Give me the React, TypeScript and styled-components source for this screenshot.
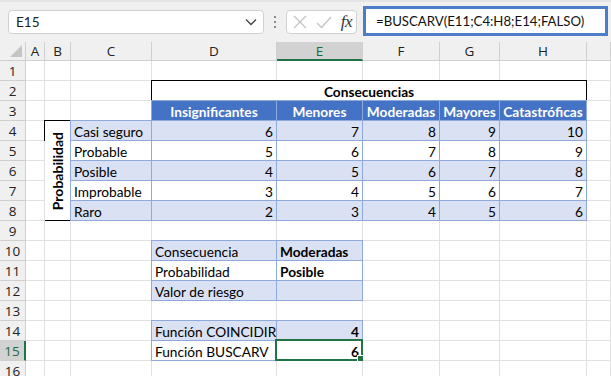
import React from "react";
import styled, { createGlobalStyle, css } from "styled-components";

const GlobalStyle = createGlobalStyle`
  html, body {
    margin: 0;
    padding: 0;
    background: #ffffff;
    overflow: hidden;
  }
  * {
    box-sizing: border-box;
  }
`;

const CELL_FONT = `Lato, "Liberation Sans", sans-serif`;
const UI_FONT = `"Open Sans", "Noto Sans", sans-serif`;

const GRID = "#e1e1e1";
const HEAD_LINE = "#cfcfcf";
const TABLE_LINE = "#8ea9db";
const BAND = "#d9e1f2";
const HEAD_BLUE = "#4472c4";
const GREEN = "#217346";

const Page = styled.div`
  width: 611px;
  height: 376px;
  overflow: hidden;
  background: #ffffff;
`;

const Toolbar = styled.div`
  height: 42px;
  background: #f0f0f0;
  border-top: 2px solid #e4e4e4;
  display: flex;
  align-items: flex-start;
  padding: 4px 0 0 8px;
`;

const NameBox = styled.div`
  width: 256px;
  height: 24px;
  margin-top: 4px;
  background: #ffffff;
  border: 1px solid #d0d0d0;
  border-radius: 4px;
  display: flex;
  align-items: center;
  justify-content: space-between;
  padding: 0 6px 0 7px;
  font-family: ${CELL_FONT};
  font-size: 13.5px;
  color: #222;
`;

const Dots = styled.div`
  width: 22px;
  height: 32px;
  display: flex;
  align-items: center;
  justify-content: center;
`;

const FxBox = styled.div`
  width: 71px;
  height: 24px;
  margin-top: 4px;
  background: #ffffff;
  border: 1px solid #d0d0d0;
  border-radius: 4px;
  display: flex;
  align-items: center;
  justify-content: space-between;
  padding: 0 4px 0 6px;
`;

const Fx = styled.span`
  font-family: "Liberation Serif", "DejaVu Serif", serif;
  font-style: italic;
  font-size: 17px;
  color: #333;
  letter-spacing: -0.5px;
`;

const FormulaBox = styled.div`
  width: 245px;
  height: 30px;
  margin-left: 6px;
  background: #ffffff;
  border: 3px solid #4d7cc8;
  display: flex;
  align-items: center;
  padding-left: 10px;
  font-family: ${CELL_FONT};
  font-size: 13.2px;
  color: #111;
`;

const Sheet = styled.div`
  display: grid;
  grid-template-columns: 26px 19px 26px 81px 125px 86px 77px 60px 87px 1fr;
  grid-template-rows: 19px repeat(16, 20px);
`;

type Align = "left" | "right" | "center";

const Cell = styled.div<{
  $col: number;
  $row: number;
  $span?: number;
  $rowSpan?: number;
  $bg?: string;
  $line?: string;
  $edge?: string;
  $align?: Align;
  $bold?: boolean;
  $color?: string;
}>`
  grid-column: ${(p) => p.$col} / span ${(p) => p.$span ?? 1};
  grid-row: ${(p) => p.$row} / span ${(p) => p.$rowSpan ?? 1};
  position: relative;
  background: ${(p) => p.$bg ?? "#ffffff"};
  border-right: 1px solid ${(p) => p.$line ?? GRID};
  border-bottom: 1px solid ${(p) => p.$line ?? GRID};
  ${(p) =>
    p.$edge &&
    css`
      box-shadow: -1px 0 0 ${p.$edge}, 0 -1px 0 ${p.$edge}, -1px -1px 0 ${p.$edge};
    `}
  display: flex;
  align-items: center;
  justify-content: ${(p) =>
    p.$align === "right" ? "flex-end" : p.$align === "center" ? "center" : "flex-start"};
  padding: 1px 3px 0 3px;
  font-family: ${CELL_FONT};
  font-size: 13.7px;
  font-weight: ${(p) => (p.$bold ? 700 : 400)};
  color: ${(p) => p.$color ?? "#000"};
  white-space: nowrap;
  overflow: visible;
`;

const HeadCell = styled.div<{ $col: number; $row: number; $active?: boolean; $side?: "col" | "row" }>`
  grid-column: ${(p) => p.$col};
  grid-row: ${(p) => p.$row};
  position: relative;
  background: ${(p) => (p.$active ? "#d2d2d2" : "#f0f0f0")};
  border-right: 1px solid ${HEAD_LINE};
  border-bottom: 1px solid ${HEAD_LINE};
  ${(p) =>
    p.$active && p.$side === "col" &&
    css`
      border-bottom: 2px solid ${GREEN};
    `}
  ${(p) =>
    p.$active && p.$side === "row" &&
    css`
      border-right: 2px solid ${GREEN};
    `}
  display: flex;
  align-items: center;
  justify-content: center;
  font-family: ${UI_FONT};
  font-size: 13.5px;
  color: ${(p) => (p.$active ? "#1b6b3f" : "#222")};
`;

const Corner = styled.div`
  grid-column: 1;
  grid-row: 1;
  position: relative;
  background: #f0f0f0;
  border-right: 1px solid ${HEAD_LINE};
  border-bottom: 1px solid ${HEAD_LINE};
  &::after {
    content: "";
    position: absolute;
    right: 3px;
    bottom: 3px;
    width: 0;
    height: 0;
    border-left: 12px solid transparent;
    border-bottom: 12px solid #c4c4c4;
  }
`;

const VerticalLabel = styled.span`
  writing-mode: vertical-rl;
  transform: rotate(180deg);
  font-weight: 700;
  font-size: 14px;
`;

const Selection = styled.div`
  position: absolute;
  left: -2px;
  top: -2px;
  right: -1px;
  bottom: -1px;
  border: 2px solid ${GREEN};
  pointer-events: none;
  &::after {
    content: "";
    position: absolute;
    right: -4px;
    bottom: -4px;
    width: 6px;
    height: 6px;
    background: ${GREEN};
    border: 1px solid #fff;
  }
`;

// column I is only partly visible, its letter falls outside the window
const COLS = ["A", "B", "C", "D", "E", "F", "G", "H", "I"];
const CONSEQ = ["Insignificantes", "Menores", "Moderadas", "Mayores", "Catastróficas"];
const PROB = ["Casi seguro", "Probable", "Posible", "Improbable", "Raro"];

type Spec = {
  text?: React.ReactNode;
  span?: number;
  rowSpan?: number;
  bg?: string;
  line?: string;
  edge?: string;
  align?: Align;
  bold?: boolean;
  color?: string;
  selected?: boolean;
};

function buildSpecs() {
  const specs: Record<string, Spec> = {};
  specs["D2"] = { text: "Consecuencias", span: 5, bold: true, align: "center", line: "#000", edge: "#000" };
  CONSEQ.forEach((c, i) => {
    specs[COLS[3 + i] + "3"] = {
      text: c,
      bg: HEAD_BLUE,
      line: TABLE_LINE,
      edge: TABLE_LINE,
      bold: true,
      color: "#fff",
      align: "center",
    };
  });
  specs["B4"] = {
    text: <VerticalLabel>Probabilidad</VerticalLabel>,
    rowSpan: 5,
    line: "#000",
    edge: "#000",
    align: "center",
  };
  PROB.forEach((p, r) => {
    const row = 4 + r;
    const bg = r % 2 === 0 ? BAND : "#fff";
    specs["C" + row] = { text: p, bg, line: TABLE_LINE, edge: TABLE_LINE };
    for (let i = 0; i < 5; i++) {
      specs[COLS[3 + i] + row] = { text: 6 - r + i, bg, line: TABLE_LINE, edge: TABLE_LINE, align: "right" };
    }
  });
  const lookup: [string, string, boolean][] = [
    ["Consecuencia", "Moderadas", true],
    ["Probabilidad", "Posible", false],
    ["Valor de riesgo", "", true],
  ];
  lookup.forEach(([label, value, band], i) => {
    const row = 10 + i;
    const bg = band ? BAND : "#fff";
    specs["D" + row] = { text: label, bg, line: TABLE_LINE, edge: TABLE_LINE };
    specs["E" + row] = { text: value, bg, line: TABLE_LINE, edge: TABLE_LINE, bold: true };
  });
  specs["D14"] = { text: "Función COINCIDIR", bg: BAND, line: TABLE_LINE, edge: TABLE_LINE };
  specs["E14"] = { text: 4, bg: BAND, line: TABLE_LINE, edge: TABLE_LINE, bold: true, align: "right" };
  specs["D15"] = { text: "Función BUSCARV", line: TABLE_LINE, edge: TABLE_LINE };
  specs["E15"] = { text: 6, line: TABLE_LINE, edge: TABLE_LINE, bold: true, align: "right", selected: true };
  return specs;
}

const specs = buildSpecs();

function covered(col: number, row: number) {
  // D2:H2 merged, B4:B8 merged
  if (row === 2 && col >= 5 && col <= 8) return true;
  if (col === 2 && row >= 5 && row <= 8) return true;
  return false;
}

function Chevron() {
  return (
    <svg width="12" height="8" viewBox="0 0 12 8">
      <path d="M1 1.5 L6 6.5 L11 1.5" fill="none" stroke="#444" strokeWidth="1.3" />
    </svg>
  );
}

function XIcon() {
  return (
    <svg width="14" height="14" viewBox="0 0 14 14">
      <path d="M1 1 L13 13 M13 1 L1 13" stroke="#c3c3c3" strokeWidth="1.3" fill="none" />
    </svg>
  );
}

function CheckIcon() {
  return (
    <svg width="16" height="13" viewBox="0 0 16 13">
      <path d="M1 7 L5.5 11.5 L15 1" stroke="#c3c3c3" strokeWidth="1.3" fill="none" />
    </svg>
  );
}

function DotsIcon() {
  return (
    <svg width="4" height="14" viewBox="0 0 4 14">
      <rect x="1" y="1" width="2" height="2" fill="#8a8a8a" />
      <rect x="1" y="6" width="2" height="2" fill="#8a8a8a" />
      <rect x="1" y="11" width="2" height="2" fill="#8a8a8a" />
    </svg>
  );
}

export default function App() {
  const cells: React.ReactNode[] = [];
  cells.push(<Corner key="corner" />);
  COLS.forEach((c, i) => {
    cells.push(
      <HeadCell key={"h" + c} $col={i + 2} $row={1} $active={c === "E"} $side="col">
        {c === "I" ? "" : c}
      </HeadCell>
    );
  });
  for (let row = 1; row <= 16; row++) {
    cells.push(
      <HeadCell key={"r" + row} $col={1} $row={row + 1} $active={row === 15} $side="row">
        {row}
      </HeadCell>
    );
    for (let col = 1; col <= 9; col++) {
      if (covered(col, row)) continue;
      const ref = COLS[col - 1] + row;
      const s = specs[ref] ?? {};
      cells.push(
        <Cell
          key={ref}
          $col={col + 1}
          $row={row + 1}
          $span={s.span}
          $rowSpan={s.rowSpan}
          $bg={s.bg}
          $line={s.line}
          $edge={s.edge}
          $align={s.align}
          $bold={s.bold}
          $color={s.color}
        >
          {s.text}
          {s.selected && <Selection />}
        </Cell>
      );
    }
  }

  return (
    <Page>
      <GlobalStyle />
      <Toolbar>
        <NameBox>
          <span>E15</span>
          <Chevron />
        </NameBox>
        <Dots>
          <DotsIcon />
        </Dots>
        <FxBox>
          <XIcon />
          <CheckIcon />
          <Fx>fx</Fx>
        </FxBox>
        <FormulaBox>=BUSCARV(E11;C4:H8;E14;FALSO)</FormulaBox>
      </Toolbar>
      <Sheet>{cells}</Sheet>
    </Page>
  );
}
